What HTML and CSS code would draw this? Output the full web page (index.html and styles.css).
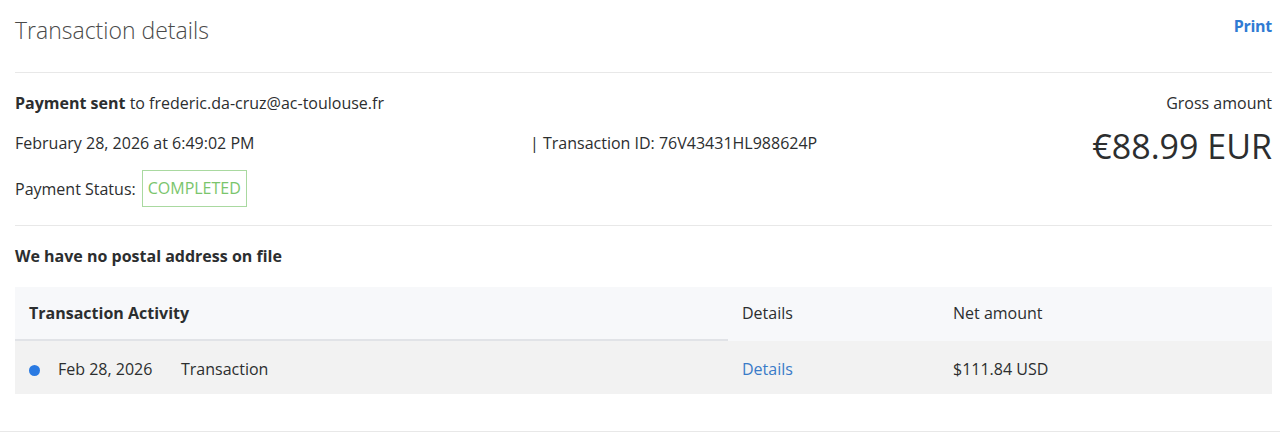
FILE: index.html
```html
<!DOCTYPE html>
<html lang="en">
<head>
<meta charset="utf-8">
<title>Transaction details</title>
<link rel="stylesheet" href="styles.css">
</head>
<body>
<div class="page">
  <header class="top">
    <h1 class="title">Transaction details</h1>
    <a class="print" href="#">Print</a>
  </header>

  <section class="summary">
    <div class="summary-left">
      <div class="line"><strong>Payment sent</strong> to frederic.da-cruz@ac-toulouse.fr</div>
      <div class="line line-split">
        <span class="date">February 28, 2026 at 6:49:02 PM</span>
        <span class="txid">| Transaction ID: 76V43431HL988624P</span>
      </div>
      <div class="status-row">
        <span>Payment Status:</span>
        <span class="badge">COMPLETED</span>
      </div>
    </div>
    <div class="summary-right">
      <div class="line">Gross amount</div>
      <div class="amount">€88.99 EUR</div>
    </div>
  </section>

  <h2 class="address">We have no postal address on file</h2>

  <div class="activity">
    <div class="cell head first">Transaction Activity</div>
    <div class="cell head">Details</div>
    <div class="cell head">Net amount</div>

    <div class="cell row first">
      <span class="dot"></span>
      <span class="row-date">Feb 28, 2026</span>
      <span>Transaction</span>
    </div>
    <div class="cell row"><a class="link" href="#">Details</a></div>
    <div class="cell row">$111.84 USD</div>
  </div>
</div>
<div class="footer-line"></div>
</body>
</html>
```

FILE: styles.css
```css
html, body {
  margin: 0;
  padding: 0;
  background: #ffffff;
}

body {
  font-family: "Open Sans", "Noto Sans", "Liberation Sans", sans-serif;
  font-size: 16px;
  color: #2c2e2f;
}

.page {
  padding: 0 8px 0 15px;
}

.top {
  display: flex;
  justify-content: space-between;
  align-items: flex-start;
  height: 72px;
  border-bottom: 1px solid #e8e8e8;
}

.title {
  margin: 14px 0 0;
  font-size: 23px;
  line-height: 32px;
  font-weight: 300;
  color: #4a4a4a;
}

.print {
  margin-top: 16px;
  font-size: 16px;
  line-height: 20px;
  font-weight: 700;
  letter-spacing: -0.3px;
  color: #2f7bd3;
  text-decoration: none;
}

.summary {
  display: flex;
  justify-content: space-between;
  align-items: flex-start;
  padding: 20px 0 18px;
  border-bottom: 1px solid #e8e8e8;
}

.summary-left {
  display: flex;
  flex-direction: column;
  gap: 20px;
  flex: 1;
}

.line {
  line-height: 20px;
}

.line strong {
  font-weight: 700;
}

.line-split {
  display: flex;
}

.date {
  width: 515px;
}

.status-row {
  display: flex;
  align-items: center;
  gap: 6px;
  margin-top: -3px;
}

.badge {
  display: inline-block;
  box-sizing: border-box;
  height: 37px;
  line-height: 35px;
  padding: 0 5px;
  border: 1px solid #a9d9a0;
  color: #7ac56c;
}

.summary-right {
  display: flex;
  flex-direction: column;
  align-items: flex-end;
}

.amount {
  margin-top: 11px;
  font-size: 34px;
  line-height: 44px;
  color: #2c2e2f;
}

.address {
  margin: 20px 0 21px;
  font-size: 16px;
  line-height: 20px;
  font-weight: 700;
}

.activity {
  display: grid;
  grid-template-columns: 713px 211px 1fr;
}

.cell {
  display: flex;
  align-items: center;
  padding-left: 14px;
  box-sizing: border-box;
}

.head {
  height: 54px;
  background: #f7f8fa;
  padding-bottom: 2px;
}

.head.first {
  font-weight: 700;
  border-bottom: 2px solid #e1e3e7;
  padding-bottom: 0;
}

.row {
  height: 53px;
  background: #f2f2f2;
  padding-top: 2px;
}

.dot {
  width: 11px;
  height: 11px;
  border-radius: 50%;
  background: #2a7ae2;
  margin: 4px 18px 0 0;
}

.row-date {
  width: 123px;
}

.link {
  color: #3a7bc8;
  text-decoration: none;
}

.footer-line {
  margin-top: 37px;
  border-top: 1px solid #e8e8e8;
}
```
